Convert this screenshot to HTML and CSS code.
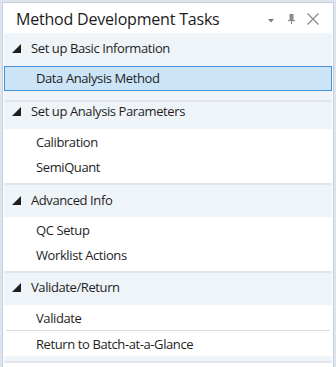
FILE: index.html
```html
<!DOCTYPE html>
<html>
<head>
<meta charset="utf-8">
<link rel="stylesheet" href="styles.css">
</head>
<body>
<div class="panel">
  <div class="titlebar">
    <span class="title">Method Development Tasks</span>
    <svg class="ic-drop" width="6" height="4" viewBox="0 0 6 4"><polygon points="0,0 6,0 3,3.5" fill="#7a7a7a"/></svg>
    <svg class="ic-pin" width="7" height="10" viewBox="0 0 7 10"><rect x="1.5" y="0" width="4" height="6" fill="#8c8c8c"/><rect x="0" y="6" width="7" height="1.2" fill="#8c8c8c"/><rect x="3" y="7" width="1" height="3" fill="#8c8c8c"/></svg>
    <svg class="ic-close" width="12" height="12" viewBox="0 0 12 12"><path d="M0.5 0.5 L11.5 11.5 M11.5 0.5 L0.5 11.5" stroke="#8a8a8a" stroke-width="1.2" fill="none"/></svg>
  </div>
  <div class="content">
    <section class="group g1">
      <div class="ghead"><svg class="tri" width="9" height="9" viewBox="0 0 9 9"><polygon points="9,0 9,9 0,9" fill="#1e1e1e"/></svg>Set up Basic Information</div>
      <ul class="items light">
        <li class="item selected">Data Analysis Method</li>
      </ul>
    </section>
    <div class="sep"></div>
    <section class="group g2">
      <div class="ghead"><svg class="tri" width="9" height="9" viewBox="0 0 9 9"><polygon points="9,0 9,9 0,9" fill="#1e1e1e"/></svg>Set up Analysis Parameters</div>
      <ul class="items">
        <li class="item">Calibration</li>
        <li class="item">SemiQuant</li>
      </ul>
    </section>
    <div class="sep"></div>
    <section class="group g3">
      <div class="ghead"><svg class="tri" width="9" height="9" viewBox="0 0 9 9"><polygon points="9,0 9,9 0,9" fill="#1e1e1e"/></svg>Advanced Info</div>
      <ul class="items">
        <li class="item">QC Setup</li>
        <li class="item">Worklist Actions</li>
      </ul>
    </section>
    <div class="sep"></div>
    <section class="group g4">
      <div class="ghead"><svg class="tri" width="9" height="9" viewBox="0 0 9 9"><polygon points="9,0 9,9 0,9" fill="#1e1e1e"/></svg>Validate/Return</div>
      <ul class="items last">
        <li class="item divided">Validate</li>
        <li class="item">Return to Batch-at-a-Glance</li>
      </ul>
    </section>
    <div class="sep end"></div>
  </div>
</div>
</body>
</html>
```

FILE: styles.css
```css
* { box-sizing: border-box; }
html, body {
  margin: 0;
  padding: 0;
  width: 336px;
  height: 367px;
  overflow: hidden;
  background: #dbe6f1;
  font-family: "Open Sans", "Noto Sans", sans-serif;
  color: #1e1e1e;
}
.panel {
  margin: 2px 2px 0 2px;
  height: 365px;
  background: #ffffff;
  border: 1px solid #c7ced6;
  border-bottom: none;
}
.titlebar {
  height: 30px;
  display: flex;
  align-items: center;
  padding: 1px 14px 0 13px;
}
.title {
  flex: 1;
  font-size: 16px;
  letter-spacing: -0.2px;
  color: #1b1b1b;
}
.ic-drop { margin-top: 4px; }
.ic-pin { margin-left: 14px; margin-top: 1px; }
.ic-close { margin-left: 12px; }
.content {
  margin: 0 0 0 1px;
  width: 328px;
  background: #eff4f9;
  border-radius: 3px 3px 0 0;
}
.ghead {
  display: flex;
  align-items: flex-end;
  font-size: 13px;
  letter-spacing: -0.4px;
  padding-left: 8px;
  line-height: 17px;
}
.tri { margin-right: 10px; margin-bottom: 4px; }
.g1 .ghead { height: 30px; padding-bottom: 6px; }
.g2 .ghead { height: 27px; padding-bottom: 9px; }
.g3 .ghead { height: 32px; padding-bottom: 8px; }
.g4 .ghead { height: 32px; padding-bottom: 9px; }
.items {
  list-style: none;
  margin: 0;
  padding: 0 0 4px 0;
  background: #ffffff;
}
.items.light {
  background: #eff4f9;
  padding: 3px 0 9px 0;
}
.items.last { padding-bottom: 0; }
.item {
  height: 25px;
  padding-top: 2px;
  line-height: 23px;
  font-size: 13px;
  letter-spacing: -0.4px;
  padding-left: 32px;
}
.item.selected {
  background: #cce4f7;
  border: 1px solid #4195df;
  padding-top: 0;
  line-height: 23px;
  padding-left: 31px;
}
.item.divided {
  height: 26px;
  border-bottom: 1px solid #dadada;
  margin: 0 2px;
  padding-left: 30px;
}
.sep {
  height: 2px;
  background: #e2e6ea;
  border-radius: 1px;
}
.sep.end { margin-top: 5px; }
```
